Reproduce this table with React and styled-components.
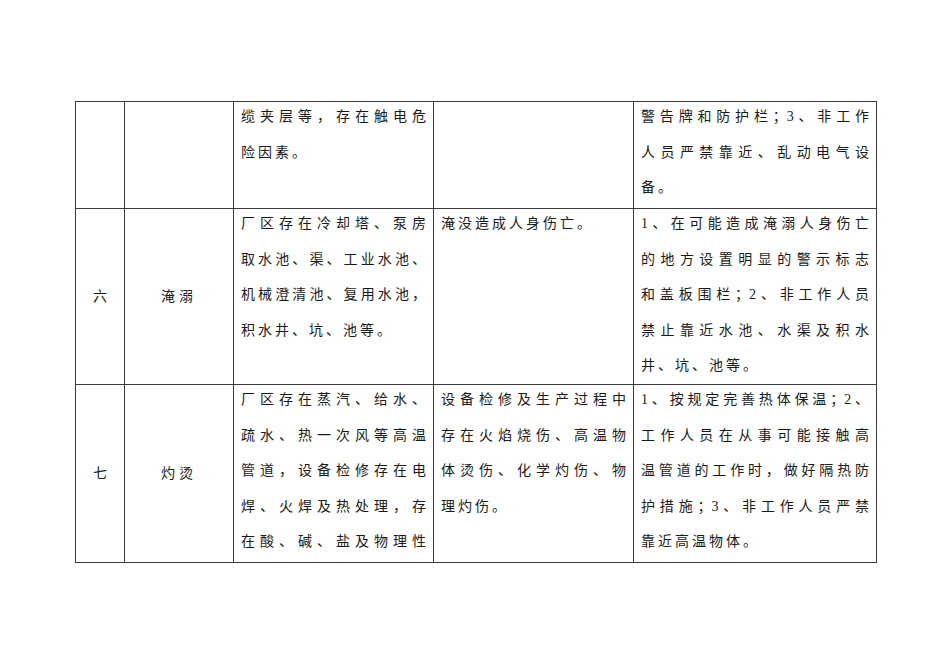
import styled, { createGlobalStyle } from 'styled-components';

const GlobalStyle = createGlobalStyle`
  html, body {
    margin: 0;
    padding: 0;
    background: #ffffff;
  }
`;

const Page = styled.div`
  width: 950px;
  height: 672px;
  box-sizing: border-box;
  padding: 101px 0 0 75px;
  background: #ffffff;
  font-family: "Liberation Serif", "Noto Sans CJK SC", serif;
  font-size: 14px;
  color: #1a1a1a;
`;

const Table = styled.table`
  border-collapse: collapse;
  table-layout: fixed;
  width: 801px;
`;

const Row = styled.tr`
  height: ${(p) => p.$height}px;
`;

const Cell = styled.td`
  border: 1px solid #3c3c3c;
  padding: 0 7px;
  vertical-align: ${(p) => (p.$center ? 'middle' : 'top')};
  text-align: ${(p) => (p.$center ? 'center' : 'left')};
  line-height: 35.5px;
`;

const Lines = styled.div`
  margin-top: -3px;
`;

const Line = styled.div`
  white-space: nowrap;
  text-align: ${(p) => (p.$full ? 'justify' : 'left')};
  text-align-last: ${(p) => (p.$full ? 'justify' : 'left')};
  letter-spacing: ${(p) => (p.$full ? '0' : '3px')};
`;

const Label = styled.span`
  letter-spacing: ${(p) => (p.$spread ? '4px' : '0')};
`;

const Text = ({ lines }) => (
  <Lines>
    {lines.map((l, i) => (
      <Line key={i} $full={i < lines.length - 1 || l.endsWith('性')}>
        {l}
      </Line>
    ))}
  </Lines>
);

const rows = [
  {
    height: 107,
    no: '',
    name: '',
    place: ['缆夹层等，存在触电危', '险因素。'],
    harm: [],
    measure: ['警告牌和防护栏；3、非工作', '人员严禁靠近、乱动电气设', '备。'],
  },
  {
    height: 176,
    no: '六',
    name: '淹溺',
    place: ['厂区存在冷却塔、泵房', '取水池、渠、工业水池、', '机械澄清池、复用水池，', '积水井、坑、池等。'],
    harm: ['淹没造成人身伤亡。'],
    measure: [
      '1、在可能造成淹溺人身伤亡',
      '的地方设置明显的警示标志',
      '和盖板围栏；2、非工作人员',
      '禁止靠近水池、水渠及积水',
      '井、坑、池等。',
    ],
  },
  {
    height: 178,
    no: '七',
    name: '灼烫',
    place: [
      '厂区存在蒸汽、给水、',
      '疏水、热一次风等高温',
      '管道，设备检修存在电',
      '焊、火焊及热处理，存',
      '在酸、碱、盐及物理性',
    ],
    harm: ['设备检修及生产过程中', '存在火焰烧伤、高温物', '体烫伤、化学灼伤、物', '理灼伤。'],
    measure: [
      '1、按规定完善热体保温；2、',
      '工作人员在从事可能接触高',
      '温管道的工作时，做好隔热防',
      '护措施；3、非工作人员严禁',
      '靠近高温物体。',
    ],
  },
];

export default function App() {
  return (
    <>
      <GlobalStyle />
      <Page>
        <Table>
          <colgroup>
            <col style={{ width: 49 }} />
            <col style={{ width: 109 }} />
            <col style={{ width: 200 }} />
            <col style={{ width: 200 }} />
            <col style={{ width: 243 }} />
          </colgroup>
          <tbody>
            {rows.map((r, i) => (
              <Row key={i} $height={r.height}>
                <Cell $center>{r.no}</Cell>
                <Cell $center>
                  <Label $spread>{r.name}</Label>
                </Cell>
                <Cell>
                  <Text lines={r.place} />
                </Cell>
                <Cell>
                  <Text lines={r.harm} />
                </Cell>
                <Cell>
                  <Text lines={r.measure} />
                </Cell>
              </Row>
            ))}
          </tbody>
        </Table>
      </Page>
    </>
  );
}
